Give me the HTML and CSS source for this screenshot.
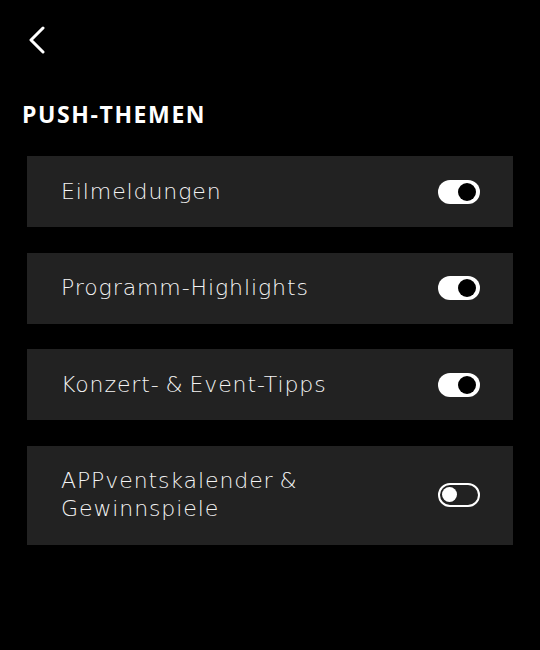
FILE: index.html
```html
<!DOCTYPE html>
<html>
  <head>
  <meta charset="utf-8">
  <title>Push-Themen</title>
  <link rel="stylesheet" href="styles.css">
  </head>
  <body>
    <div class="topbar">
      <svg class="back" width="20" height="28" viewBox="0 0 20 28">
        <polyline points="16,2 4,14 16,26" fill="none" stroke="#fff" stroke-width="3" stroke-linecap="round" stroke-linejoin="round"/>
      </svg>
    </div>

    <h1 class="titel">PUSH-THEMEN</h1>

    <div class="liste">
      <div class="eintrag">
        <span class="label">Eilmeldungen</span>
        <span class="schalter an"><span class="knopf"></span></span>
      </div>
      <div class="eintrag">
        <span class="label">Programm-Highlights</span>
        <span class="schalter an"><span class="knopf"></span></span>
      </div>
      <div class="eintrag">
        <span class="label">Konzert- &amp; Event-Tipps</span>
        <span class="schalter an"><span class="knopf"></span></span>
      </div>
      <div class="eintrag hoch">
        <span class="label">APPventskalender &amp;<br>Gewinnspiele</span>
        <span class="schalter aus"><span class="knopf"></span></span>
      </div>
    </div>
  </body>
</html>
```

FILE: styles.css
```css
body {
  margin: 0;
  background-color: #000;
  color: #fff;
  font-family: "DejaVu Sans", "Open Sans", sans-serif;
}

.topbar {
  height: 78px;
  padding-left: 27px;
  padding-top: 26px;
  box-sizing: border-box;
}
.back { display: block; }

.titel {
  margin: 0;
  padding-left: 22px;
  font-family: "Open Sans", sans-serif;
  font-size: 23px;
  font-weight: 700;
  letter-spacing: 1.6px;
  line-height: 30px;
  padding-top: 21px;
}

.liste {
  margin: 27px 27px 0 27px;
  display: flex;
  flex-direction: column;
  gap: 25.5px;
}

.eintrag {
  background-color: #222222;
  height: 71px;
  display: flex;
  align-items: center;
  justify-content: space-between;
  padding: 0 33px 0 34px;
}
.eintrag.hoch { height: 99px; }

.label {
  font-size: 22px;
  font-weight: 200;
  letter-spacing: 0.9px;
  word-spacing: -2px;
  line-height: 28px;
  color: #f4f4f4;
}

.schalter {
  width: 42px;
  height: 24px;
  border-radius: 12px;
  box-sizing: border-box;
  position: relative;
  flex-shrink: 0;
}
.schalter.an { background-color: #fff; }
.schalter.aus { border: 2.5px solid #fff; }

.knopf {
  position: absolute;
  border-radius: 50%;
}
.an .knopf {
  width: 18px;
  height: 18px;
  top: 3px;
  right: 4px;
  background-color: #000;
}
.aus .knopf {
  width: 15px;
  height: 15px;
  top: 2px;
  left: 2px;
  background-color: #fff;
}
```
